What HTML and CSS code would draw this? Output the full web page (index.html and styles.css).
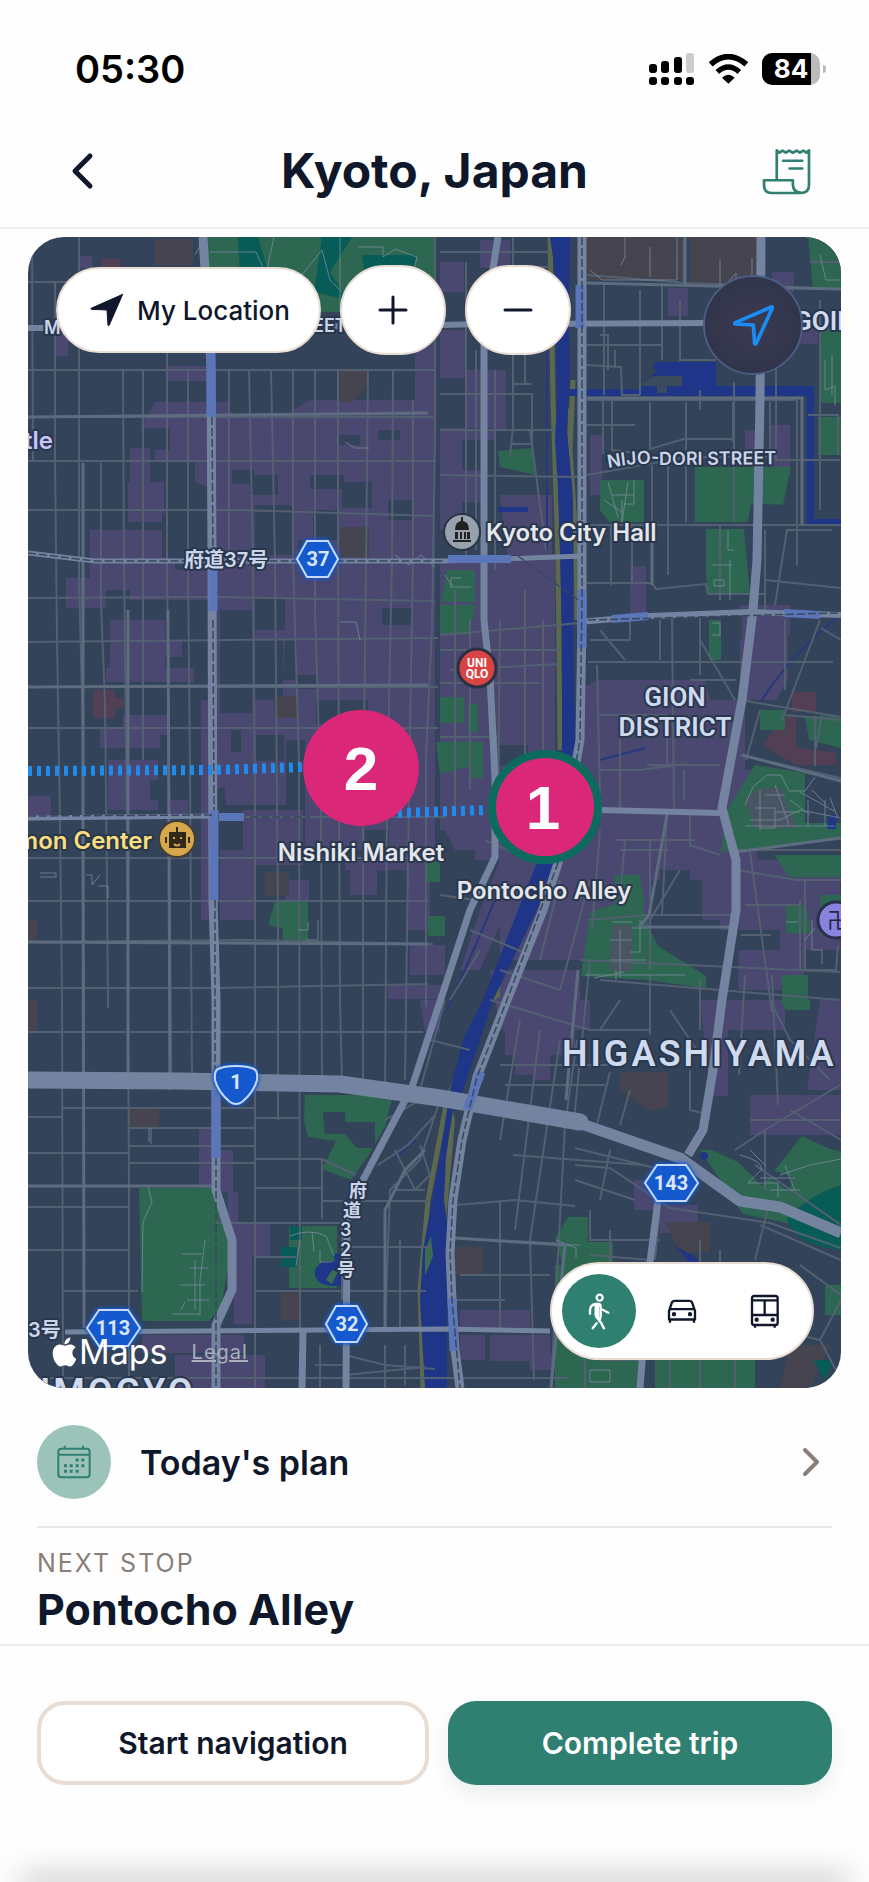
FILE: index.html
```html
<!DOCTYPE html>
<html lang="en">
<head>
    <meta charset="UTF-8">
    <meta name="viewport" content="width=device-width, initial-scale=1.0">
    <title>Kyoto, Japan</title>
    <link rel="stylesheet" href="styles.css">
</head>
<body>
    <div class="status-bar">
        <span class="time">05:30</span>
        <div class="status-icons">
            <svg width="46" height="33" viewBox="0 0 46 33" aria-hidden="true">
                <rect x="0" y="11" width="8" height="9" rx="3"/>
                <rect x="12" y="8" width="8" height="12" rx="3"/>
                <rect x="25" y="4" width="8" height="16" rx="3"/>
                <rect x="37" y="0" width="8" height="20" rx="3" fill="#ccc"/>
                <rect x="0" y="24" width="8" height="8" rx="3"/>
                <rect x="12" y="24" width="8" height="8" rx="3"/>
                <rect x="25" y="24" width="8" height="8" rx="3"/>
                <rect x="37" y="24" width="8" height="8" rx="3"/>
            </svg>
            <svg width="39" height="30" viewBox="326 70 117 90" aria-hidden="true">
                <path d="M331 101Q384 55 438 101" fill="none" stroke="#000" stroke-width="17"/>
                <path d="M351 124Q384 94 417 124" fill="none" stroke="#000" stroke-width="16"/>
                <path d="M384 159L365 141Q384 124 403 141Z"/>
            </svg>
            <div class="battery"><span>84</span></div>
        </div>
    </div>

    <header class="header">
        <button class="icon-btn icon-btn-left" aria-label="Back">
            <svg width="24" height="38" viewBox="0 0 24 38"><path d="M20 4L5 19L20 34" fill="none" stroke="#0f172a" stroke-width="5" stroke-linecap="round" stroke-linejoin="round"/></svg>
        </button>
        <h1>Kyoto, Japan</h1>
        <button class="icon-btn icon-btn-right" aria-label="Expenses">
            <svg width="49" height="47" viewBox="484 354 146 140" fill="none" stroke="#2f8070" stroke-width="8" stroke-linejoin="round" stroke-linecap="round">
                <path d="M528 449V361l8 7 9-6 10 6 10-6 11 6 11-6 10 6 10-6 9 6 8-7V464Q624 488 599 488H512Q490 488 490 464V450H576V463Q577 486 599 487"/>
                <path d="M547 392h57M566 415h38"/>
            </svg>
        </button>
    </header>

    <main>
        <div class="map">
            <svg class="map-canvas" viewBox="28 237 813 1151" preserveAspectRatio="xMidYMid slice" role="img" aria-label="Map of Kyoto">
                <rect x="28" y="237" width="813" height="1151" fill="#334359"/>

                <!-- shopping areas -->
                <g fill="#4a4770">
                    <path d="M167 366h42v15h-42zM155 402h75v10h60l20-12h105v-50l20-20v540h-60v-20h-70v-110h-60v40l-30 10v130h-14V700h14V490l-20-8v-20h-40v-12h15v-22h-30zM128 482h36v40h-36zM130 448h20v60h-20zM90 530h85v60H90zM66 578h40v30H66zM110 620h55v62h-55zM145 640h37v17h-37zM106 668h88v14h-88zM123 715h45v20h-45zM100 728h60v20h-60zM108 760h50v50h-50zM28 796h23v20H28zM168 800h20v16h-20zM56 320h12v36H56zM78 256h14v12H78zM130 570h85v30h-85z"/>
                    <path d="M220 715h66v90h-60zM220 850h35v70h-35zM243 810h60v55h-60zM345 860h32v35h-32zM408 860h22v70h-22zM410 945h35v30h-35zM388 985h57v14h-57zM285 880h24v20h-24z"/>
                    <path d="M440 262h24v30h-24zM480 240h30v28h-30zM440 330h26v48h-26zM466 370h40v60h-40zM440 440h22v90h-22zM440 470h45v32h-45zM500 495h52v60h-45zM590 435h12v60h-12zM440 440h55v-12h-55zM668 288h20v28h-20zM772 272h22v20h-22zM770 425h20v50h-20zM745 430h10v30h-10zM800 320h18v24h-18zM630 566h16v70h-16zM740 605h50v30h-50z"/>
                    <path d="M440 560h115v270H440zM500 850h160v110H500zM597 680h160v210l-20 40H580V690zM738 620h50v60l-30 50h-22zM740 860h100v90h-36v40h-66zM705 1000h80v30h-80zM700 1000h28v96h-18zM820 1000h21v90h-34zM505 1000h70v55h-70zM515 1045h22v30h-22zM535 1050h15v30h-15zM750 1095h91v40h-91zM490 970h100v60h-90zM660 1205h38v28h-38zM634 1180h25v30h-25zM440 820h110l-30 60-40 90h-20l20-60 20-50h-40z"/>
                    <path d="M199 1128h14v64h-14zM219 1150h14v42h-14zM228 1192h10v30h-10zM232 1223h38v34h-38zM234 1250h18v74h-18zM175 1355h90v33h-90zM142 1335h102v18H142zM420 1000h20v32h-15zM460 1310h70v20h-70zM460 1335h25v25h-25zM490 1335h60v26h-60zM530 1355h25v15h-25z"/>
                </g>

                <!-- plain blocks inside them -->
                <g fill="#334359">
                    <path d="M233 400h58v14h-58zM232 470h22v14h-22zM250 475h28v20h-28zM310 475h34v14h-34zM342 482h30v26h-30zM313 510h25v30h-25zM255 505h37v50h-37zM162 514h30v44h-30zM338 435h22v10h-22zM378 430h22v10h-22zM298 540h30v12h-30zM255 598h30v32h-30zM382 608h30v17h-30zM285 640h12v40h-14zM298 675h18v14h-18zM316 700h52v24h-52zM231 730h10v22h-10zM256 735h28v26h-28zM365 830h24v22h-24zM330 870h20v28h-20zM150 780h16v20h-16zM388 500h24v20h-24zM220 610h32v103h-32zM255 640h28v60h-28z"/>
                    <path d="M597 620h100v34h-60v18h-40zM700 615h42v25h-42zM588 655h100v20h-90zM690 620h50v80h-30zM652 880h50v60h-50zM660 870h30v30h-30zM650 920h70v55h-70zM500 745h28v20h-28zM580 970h20v30h-20zM440 850h35v40h-35zM745 700h96v70h-96zM620 1000h80v30h-80zM730 930h50v20h-50z"/>
                </g>

                <!-- campuses and schools -->
                <g fill="#46444e">
                    <path d="M587 237h98v43H587zM690 237h68v50h-68zM155 239h38v26h-38zM340 370h28v16l-16 16h-12zM340 527h29v30h-29zM274 696h24v22h-24zM265 872h24v24h-24zM28 1000h9v32h-9zM28 920h9v20h-9zM128 1108h31v20h-31zM281 1293h20v27h-20zM455 1247h28v27h-28zM620 1072h48v36l-20 2-28-20zM665 1222h45v30h-30zM790 1345h40l-20 43h-30z"/>
                    <path fill="#533f53" d="M93 690h22v8h8v10h-8v10H93zM762 745l22-28h12v30l40 6v12h-40zM102 259h18v8h-18z"/>
                    <path fill="#533f53" d="M792 692h24v20h-24z"/>
                </g>

                <!-- parks -->
                <g fill="#2d6651">
                    <path d="M208 237h227v75H208z"/>
                    <path fill="#085c58" d="M238 237h20l12 40h-30zM322 237h30l-22 35 14 22 12 8-42-10zM362 255h54l-6 48h-40z"/>
                    <path d="M808 237h22l11 20v32h-28zM820 325h21v78h-21zM818 417h23v38h-23zM498 451l34-3 3 27-35-8zM600 480h44v42h-35l-9-12zM695 467h96l-8 38-32-2-3 19h-53zM706 529h38l6 66h-42l-2-20zM447 570h28v32h-34zM440 605h36l-8 30h-28zM709 620h12v40h-12zM440 697h24v26h-24zM468 704h10v28h-10zM436 742h47v36h-12v-12l-31 8z"/>
                    <path d="M760 710h25v20h-25zM805 716h36v32l-32-8zM755 765l50 8v50h36v16l-60 8-60 5 5-40zM775 855h66v22h-52zM786 905h20l6 28h-26zM820 895h21v40h-21zM782 975h26v30h-26zM275 902h33v41h-25v-14l-15-4zM426 862h14v20h-14zM428 916h17v20h-17zM590 912l50-16 8 30 10 20 48 30v12l-60-8-65-4zM645 905h-30v-30h25z"/>
                    <path d="M305 1095h88l-8 32-15 26-19 27-29-11 14-28-28-4-4-17z"/>
                    <path d="M139 1188h74l18 60-10 62-13 11h-66zM289 1226h48v62h-48zM568 1217h20v25h25v26h-50l-8-30zM555 1340h86v48h-86zM655 1355h100v33h-100zM555 1265h40v80h-40zM780 1000h30v10h-24zM825 1285h16v30h-16zM700 1150l12 0 26 12 24 24 40-50 26 12 13 4v40l-50 32-48-10z"/>
                    <path fill="#334359" d="M323 1112h22v10h30v26h-18l-12-14h-20zM743 1160l50 17-4 14z"/>
                    <path fill="#085c58" d="M841 1185v65q-50-6-54-32 24-24 54-33zM281 1247h16v20h-16zM290 1226h12v14h-12zM813 1360h20l-8 20z"/>
                    <path fill="#4a5563" d="M612 925h20v46h-22zM745 800l14-12h22l4 10 12 30h-42z"/>
                </g>

                <!-- river banks, river and canals -->
                <path d="M550 237L553 400L558 560L560 750M573 380L570 450L576 540L577 620M528 905L475 1035L447 1100L428 1200L420 1290L423 1388M545 860L515 930" fill="none" stroke="#5c6950" stroke-width="5"/>
                <path d="M453 1112L440 1190L446 1222L455 1120ZM500 975L484 1005L500 997ZM568 410l6-15v25l-7 20z" fill="#5c6950"/>
                <g fill="#1f3587">
                    <path d="M550 237L570 237L569 330L570 370L567 430L573 497L573 620L575 743L570 810L552 867L537 910L493 1000L480 1040L463 1090L452 1112L446 1157L444 1200L447 1222L447 1388L425 1388L420 1300L423 1250L432 1200L440 1157L450 1090L463 1040L483 1000L518 910L538 860L560 800L562 743L562 620L558 490L555 440L557 400L555 270Z"/>
                    <path d="M498 507h30v5h-30z"/>
                    <path d="M568 389h72l18-20h-4v-7h62v24h98v133h27v6h-34V396H568z"/>
                    <circle cx="704" cy="1156" r="4"/>
                    <path d="M315 1270q6-12 20-8l-2-8h10v14q8 18-8 18-22 0-20-16zM829 815h7v14h-9zM676 1246l20 12 10 14-14-6z"/>
                </g>
                <path d="M654 376h28v10h-15v7h-10v-7h-20z" fill="#3b4a5c"/>
                <path d="M326 1280l6-10 6 2-6 12zM425 1250l6-14 2 20-8 20z" fill="#3d6a53"/>
                <path d="M840 615q-50 40-80 88M600 760l45-12M547 350v200M415 1140l-20 18M495 900l-30 70-18 40" fill="none" stroke="#27397e" stroke-width="2"/>

                <!-- side streets -->
                <g fill="none" stroke="#526072" stroke-width="2">
                    <path d="M32 237l1 223M55 282v178l2 180 3 180 2 180 1 388M79 237v340l4 160M101 463v140l4 100 2 180 1 125M123 370l1 190 3 260 2 368v200M143 370v390M167 282v280l2 210 2 300M188 370v200l2 200 2 312M229 370v190M249 370l4 190 2 230v598M271 370l4 190 3 360v200M293 370v190l6 200 1 568M315 370v240l6 200 1 278M338 370v190l2 440 2 85M368 370l-2 200-3 240v278M393 370l-1 190-5 240-2 290M413 400v160l-4 230-4 290M435 237v200l-3 190-6 130v250"/>
                    <path d="M28 282h180M28 370h407M28 417h405M28 461h407M28 510h210l197 6M28 598l190-1 217 4M28 642l410-4M28 687h410M28 728h410M245 817h200M28 858h400M28 901h400M28 942l215-2 190 4M28 988h190l210-4M28 1032h395M62 1108h192M128 1128h126M128 1146h127M128 1163h127M28 1186h186M28 1207h100M28 1250h100M62 1291h76M28 1378h540M28 1153h100M256 1159h66l34 16M256 1118h44M256 1188h65M216 1223h130M256 1257h40M256 1291h170M322 1201h108M342 1247h90M28 1117h35M322 1159v60M342 1220v80"/>
                    <path d="M466 262v300M476 350v200M495 370v200M513 237v190l-3 30M440 252h110M440 394h92v50h-20M440 430h115M440 475l140 2M530 430l8 60 8 60M510 267h40M512 290h40M512 384h20M525 350v34M455 590v220M470 620v170M500 620l-2 180M525 590v170M543 620v140M440 650h120M440 683h100M440 737h60M440 635l140-12M450 670l110-6"/>
                    <path d="M587 275l100 8 154 6M604 285v110M640 290v105M662 285v75M684 237v45M587 365l34 2 1 28h18M680 300v60h36M700 390v20M734 382v140M587 400h210v125M776 290v170M587 345h75M615 350v18M600 335h8v35M587 425h48M603 400v54M612 400v50l26 3M650 402v47l34-10h49M686 402v120M733 402v40M770 402v60M587 475l100-18h90M587 525h254M652 465v120M668 465v110M611 525v60M632 525v60M587 583h65l4 6 50-5 2 10h58M720 600v-75M765 530v80M765 580l76 8M775 605l12-75h45M797 525v40M770 460h70M820 300v210M810 262h31M770 352h18M808 415h30v40"/>
                    <path d="M588 662h245M600 630l25 30M590 640h40v-22M660 620v40M672 615l2 200M700 615v60M690 680h46M597 665l3 130M597 715h70v50h-20M650 765h70M600 770h40l45-6M620 740v70M684 770v30M667 815l-5 100M690 815v30l30 10M700 640l35 60M740 700l101 17M740 755l101 23M760 710l-14 50M785 620v70M841 640l-20-12M820 620l-38 100M822 715l-6 33M785 715l56 5M735 850h106M750 852l22 160M805 880v90M815 716v50M737 870l60 10h44M588 920l60-5h85M600 830l-8 100M615 840h80M625 840l-5 60M650 840v60M680 870l-30 50v50M580 960l260 12M772 975l6 130M600 980l240 20M650 975v60M590 960l-16 160M700 980v50M745 975l-6 100M800 900v70h36l2-24M620 850h48M745 905h56M741 935h30"/>
                    <path d="M500 970l60 20M490 1000l100 30 60 0M520 1020l-20 120M540 1030l-25 200M560 1040l-30 200 4 140M577 1040l-12 85-14 260M500 1065h110M505 1085h100M610 1072l-15 60M630 1090l-10 35M575 1148l100 25M575 1165l35 3 60 40 100 15 71 25M575 1180l60 20M600 1200l10-50M513 1155l130 10M455 1205l60-5 60 6M455 1238l110 6M500 1200v130M460 1275h90M455 1300h50M590 1210v30h70M610 1230v40M590 1255l60 5M660 1210l-5 50M600 1030l20-30M670 1010l40 60M690 1070v40l20 5M735 1150l30-20 100-60M750 1120h91M765 1130v60M830 1080l-40-40-20-40M790 1110l51 30M755 1165l86 60M770 1200l-15 60M760 1225l81 35M800 1265l41 30M700 1240v30h20v-20M820 1340l21-40M780 1330l40 10 21 40M585 1360v28M600 1360h40v28M660 1350h80M670 1350v38M700 1350v38M735 1350v38"/>
                    <path d="M385 1120l35-20M378 1165l30-20 27-30M440 1100l-20 60-30 30-5 140M395 1150l20 40 15-15-10-30M395 1190h30M400 1240v90M315 1365h30M345 1355l40 10 50 4M320 1345v43M345 1375l80-8M385 1345v43M405 1345v40"/>
                    <path d="M440 895l35 5M485 840l45 20M470 930l60 25M480 950l-30 50M560 880l-20 80M590 880l-30 110M430 1040l40 10M445 1000l-25 90"/>
                </g>

                <!-- footpaths -->
                <g fill="none" stroke="#7f8fa0" stroke-width="1" opacity="0.75">
                    <path d="M210 252h46l10 22 8-37M322 250l-20 25-30 20M322 250l8 30 12 12M340 237v75M358 247h25v10l12-8 22 8-6 25h-40l-28 15M195 255l10-18M590 270l12 10h75v-45M625 237v20l-4 8M650 247v30M720 260v25h6l10-12v14M752 258v30M820 255l6 25h14M825 360v30l10-4v20M832 355v40"/>
                    <path d="M608 482l10 35M628 482l-6 40M634 480v24h-10M612 495h22M604 500l18 12M622 500v22M712 565h20M728 530v20h6M714 580h10v6h-10zM730 560v40M712 623h8v12h-8M445 575l8 12h18M451 588v-10h10M340 622h16l4 18M345 442l10 6h14M395 555l14 10 12-10 14 12"/>
                    <path d="M745 805l8-18 14-12h14l8 16h16l10-14M750 820h30l20-10 41 8M760 790v40M775 785l14 40M790 800l20 15M800 792l36 20M745 826h90M765 795h20M755 808h20v20h-15M812 790l14 14M825 800v25M830 798l8 20M775 812h25M808 800v26M612 922h20M610 940h22M632 928h16M640 920v32h-10M610 960h36M585 975h100M620 930v48M594 978l30-6M616 970v10M805 940l10-12M812 920v30h10v14M786 922h12"/>
                    <path d="M205 1240l-5 40v35M182 1254h20M180 1285h25M190 1268h18M172 1314h28M195 1260v50M187 1300h22M181 1310l4-8M148 1186l4 16-9 20-1 70M290 1236q20-8 36 0l8 20M312 1232l2 20M300 1240l-4 26M320 1250v12h12M740 1155q20 5 22 14l-14 14h30v14M760 1178h35M785 1165l10 26M770 1190h30M780 1175l30-10 31-6M750 1150l16 16M556 1240l20 8v10M566 1245h14M590 1370h20v12h-20zM100 875l-8 10v-10h-6M40 877h16v-4h-16M98 886h10v12M318 920v20h-12M298 930h10v-8M151 1128v16M149 1128v14"/>
                </g>

                <!-- secondary roads -->
                <g fill="none" stroke="#5e6c80" stroke-width="3">
                    <path d="M28 417l400-4M83 463v350l1 515M128 610v470M168 610l2 480M28 687l400-2M28 942l400 2M28 1186h186M685 237v48M587 283l254 6M587 398h215v127M652 525v60M735 852l106-14M742 755l99 26M385 1330v-120l20-40 20-20M455 1238l110 7-14 143M667 815l-18 100-10 12h90M578 970l-12 130"/>
                </g>

                <!-- main roads -->
                <g fill="none" stroke="#7484a0" stroke-linejoin="round">
                    <path d="M28 328h170l244-3 40-1 230-1" stroke-width="6"/>
                    <path d="M203 237l8 128 1 195 1 340 3 100v190l16 50v50l-16 35v63" stroke-width="9"/>
                    <path d="M28 553l67 8h350l138-5" stroke-width="5"/>
                    <path d="M28 818l188-2" stroke-width="5"/>
                    <path d="M498 237l-14 88v295l6 57 5 100v80l-25 53-58 177-49 93-16 40-1 168" stroke-width="7"/>
                    <path d="M582 237v383l-2 120-22 123-15 47-36 90-30 77-15 63-9 60-3 53 2 47 3 50 5 38" stroke-width="9"/>
                    <path d="M761 237l-1 163-3 160-4 50-11 90-20 108 14 52v50l-14 90-9 70-10 60-15 25" stroke-width="9"/>
                    <path d="M578 622l72-6 100-4 91 3" stroke-width="6"/>
                    <path d="M600 810l120 3" stroke-width="6"/>
                    <path d="M65 1332l380-3 105 2" stroke-width="5"/>
                    <path d="M303 1331l-1 57M658 1200l-8 62-10 126" stroke-width="7"/>
                    <path d="M28 1080l152 1 160 3 100 14 140 24" stroke-width="17" stroke-linecap="round"/>
                    <path d="M570 1120l110 38 60 43 40 6 61 26" stroke-width="11"/>
                </g>

                <!-- stations -->
                <g fill="none" stroke="#5a75b8">
                    <path d="M211 353v64M213 561v50M214 810v90M216 1090v68" stroke-width="9"/>
                    <path d="M219 817h25M448 559h63M612 619l36-3M784 613l36 2" stroke-width="8"/>
                    <path d="M580 285v43M582 590v58M481 1072l-14 38M452 1298l2 53" stroke-width="9"/>
                </g>

                <!-- railways -->
                <g fill="none" stroke="#39475e" stroke-width="1.5" stroke-dasharray="8 3">
                    <path d="M212 417l1 143M213 620l1 190M215 900v180M216 1158v230M582 237v360l-2 143-22 123-51 137-30 77-15 63-9 60-3 53 2 47 8 88M28 553l67 8h350M28 816l185-1M588 620l250-7M250 817h60M518 556l60 44"/>
                </g>

                <!-- walking route -->
                <path d="M28 771l185-1 92-3M398 813l90-3" fill="none" stroke="#208bee" stroke-width="10" stroke-dasharray="4 5"/>

                <!-- area and street names -->
                <g class="street">
                    <text x="44" y="334">M</text>
                    <text x="313" y="332">EET</text>
                    <path id="nijo" d="M608 468Q640 462 662 465L800 464" fill="none" stroke="none"/>
                    <text><textPath href="#nijo">NIJO-DORI STREET</textPath></text>
                    <text class="street-jp" x="184" y="567">府道37号</text>
                    <text class="street-jp" x="28" y="1337">3号</text>
                    <text x="349" y="1197">府</text>
                    <text x="343" y="1217">道</text>
                    <text x="340" y="1236">3</text>
                    <text x="340" y="1256">2</text>
                    <text x="337" y="1276">号</text>
                </g>
                <g class="district">
                    <text x="675" y="706" text-anchor="middle">GION</text>
                    <text x="675" y="736" text-anchor="middle">DISTRICT</text>
                    <text x="794" y="330">GOIN</text>
                    <text x="562" y="1066" class="district-lg">HIGASHIYAMA</text>
                    <text x="40" y="1404" class="district-lg">IMOGYO</text>
                </g>

                <!-- places -->
                <g class="place">
                    <text x="24" y="449" fill="#c9c4fb">tle</text>
                    <text x="152" y="849" fill="#fadf7c" text-anchor="end">mon Center</text>
                    <text x="486" y="541" fill="#e4e6ec">Kyoto City Hall</text>
                </g>
                <circle cx="462" cy="532" r="18" fill="#98a1ae" stroke="#2a3546" stroke-width="2"/>
                <path d="M455 530q0-8 6-9v-4h2v4q6 1 6 9zM455 532h3v7h-3zM460 532h2v7h-2zM464 532h2v7h-2zM467 532h3v7h-3zM453 540h18v2h-18z" fill="#222"/>
                <circle cx="177" cy="839" r="18" fill="#d6a84b" stroke="#443d36" stroke-width="2"/>
                <path d="M176 827h2v5h8v16h-17v-16h7zM165 837h2v6h-2zM188 837h2v6h-2z" fill="#33291b"/>
                <path d="M173 838h2M180 838h2M174 844q3 3 6 0" stroke="#d6a84b" stroke-width="2" fill="none"/>
                <circle cx="477" cy="668" r="19" fill="#d94343" stroke="#2c3042" stroke-width="3"/>
                <text class="uniqlo" x="477" y="667">UNI</text>
                <text class="uniqlo" x="477" y="678">QLO</text>
                <circle cx="836" cy="920" r="18" fill="#8983e0" stroke="#292f4c" stroke-width="3"/>
                <text class="temple" x="838" y="928">卍</text>

                <!-- route shields -->
                <g class="shield">
                    <path d="M297 559l10-18h21l10 18-10 18h-21z"/><text x="318" y="566">37</text>
                    <path d="M326 1324l10-18h21l10 18-10 18h-21z"/><text x="347" y="1331">32</text>
                    <path d="M87 1328l12-18h29l12 18-12 18H99z"/><text x="113" y="1335">113</text>
                    <path d="M645 1183l12-18h29l12 18-12 18h-29z"/><text x="671" y="1190">143</text>
                    <path d="M236 1066q12 0 18 3 4 2 3 11-3 12-15 22-6 4-12 0-12-10-15-22-1-9 3-11 6-3 18-3z"/><text x="236" y="1089">1</text>
                </g>

                <!-- stops -->
                <g class="stop">
                    <circle cx="361" cy="768" r="58" fill="#db2777"/>
                    <text class="num" x="361" y="790">2</text>
                    <text class="stop-name" x="361" y="861">Nishiki Market</text>
                    <circle cx="545" cy="807" r="53" fill="#db2777" stroke="#0d6b5d" stroke-width="8"/>
                    <text class="num" x="543" y="829">1</text>
                    <text class="stop-name" x="544" y="899">Pontocho Alley</text>
                </g>
            </svg>

            <div class="map-controls">
                <button class="pill">
                    <svg width="34" height="34" viewBox="208 188 104 102" aria-hidden="true"><path d="M308 191L211 234Q210 237 213 237L260 239L263 286Q265 289 267 285Z" fill="#0f172a" stroke="#0f172a" stroke-width="3" stroke-linejoin="round"/></svg>
                    My Location
                </button>
                <button class="pill zoom" aria-label="Zoom in">
                    <svg width="30" height="30" viewBox="0 0 30 30"><path d="M15 2v26M2 15h26" stroke="#0f172a" stroke-width="3" stroke-linecap="round"/></svg>
                </button>
                <button class="pill zoom" aria-label="Zoom out">
                    <svg width="30" height="30" viewBox="0 0 30 30"><path d="M2 15h26" stroke="#0f172a" stroke-width="3" stroke-linecap="round"/></svg>
                </button>
            </div>

            <button class="compass" aria-label="Track my position">
                <svg width="42" height="42" viewBox="868 228 126 126"><path d="M986 237L878 284Q874 287 879 288L932 291L936 346Q938 350 941 345L989 240Q989 236 986 237Z" fill="none" stroke="#1a8df5" stroke-width="11" stroke-linejoin="round"/></svg>
            </button>

            <div class="attribution">
                <span class="maps-logo">
                    <svg width="29" height="30" viewBox="0 0 24 24" aria-hidden="true"><path fill="#fff" d="M12.152 6.896c-.948 0-2.415-1.078-3.96-1.04-2.04.027-3.91 1.183-4.961 3.014-2.117 3.675-.546 9.103 1.519 12.09 1.013 1.454 2.208 3.09 3.792 3.039 1.52-.065 2.09-.987 3.935-.987 1.831 0 2.35.987 3.96.948 1.637-.026 2.676-1.48 3.676-2.948 1.156-1.688 1.636-3.325 1.662-3.415-.039-.013-3.182-1.221-3.22-4.857-.026-3.04 2.48-4.494 2.597-4.559-1.429-2.09-3.623-2.324-4.39-2.376-2-.156-3.675 1.09-4.61 1.09zM15.53 3.83c.843-1.012 1.4-2.427 1.245-3.83-1.207.052-2.662.805-3.532 1.818-.78.896-1.454 2.338-1.273 3.714 1.338.104 2.715-.688 3.559-1.701z"/></svg>Maps</span>
                <a href="#legal">Legal</a>
            </div>

            <div class="modes">
                <button class="mode active" aria-label="Walk">
                    <svg width="24" height="37" viewBox="136 130 72 111" fill="none" stroke="#fff" stroke-width="7" stroke-linecap="round" stroke-linejoin="round">
                        <circle cx="174" cy="144" r="9"/>
                        <path d="M145 192V182Q146 166 160 163H170Q177 163 177 172V200M162 166V194Q162 200 166 204L177 217L187 236M169 165V202M177 200L173 215M165 221L153 236M183 180L200 189"/>
                    </svg>
                </button>
                <button class="mode" aria-label="Drive">
                    <svg width="30" height="25" viewBox="379 148 90 74" fill="none" stroke="#0f172a" stroke-width="7" stroke-linejoin="round">
                        <path d="M385 209V184L393 160Q395 153 403 153H445Q453 153 455 160L463 184V209ZM388 178H460M388 209V219M460 209V219"/>
                        <circle cx="400" cy="193" r="3"/><circle cx="448" cy="193" r="3"/>
                    </svg>
                </button>
                <button class="mode" aria-label="Transit">
                    <svg width="30" height="35" viewBox="630 133 90 105" fill="none" stroke="#0f172a" stroke-width="7" stroke-linejoin="round">
                        <rect x="636" y="139" width="77" height="87" rx="7"/>
                        <path d="M636 152H713M636 196H713M674 152V196M645 226V234M704 226V234"/>
                        <circle cx="650" cy="210" r="3"/><circle cx="698" cy="210" r="3"/>
                    </svg>
                </button>
            </div>
        </div>

        <section class="plan">
            <button class="plan-row">
                <span class="plan-icon">
                    <svg width="34" height="34" viewBox="112 137 102 102" fill="none" stroke="#2f8070" stroke-width="6">
                        <rect x="116" y="148" width="94" height="86" rx="9"/>
                        <path d="M116 166H210M135 139V148M190 139V148"/>
                        <path d="M168 182h9M185 182h9M133 199h9M150 199h9M168 199h9M185 199h9M133 216h9M150 216h9M168 216h9" stroke-width="9"/>
                    </svg>
                </span>
                <span class="plan-label">Today's plan</span>
                <svg width="18" height="30" viewBox="0 0 18 30" aria-hidden="true"><path d="M3 3L15 15L3 27" fill="none" stroke="#8a7f78" stroke-width="4" stroke-linecap="round" stroke-linejoin="round"/></svg>
            </button>
            <p class="eyebrow">NEXT STOP</p>
            <h2>Pontocho Alley</h2>
        </section>
    </main>

    <footer class="actions">
        <button class="btn btn-outline">Start navigation</button>
        <button class="btn btn-primary">Complete trip</button>
    </footer>
    <div class="sheet-edge"></div>
</body>
</html>
```
FILE: styles.css
```css
* {
    margin: 0;
    padding: 0;
    box-sizing: border-box;
}

body {
    min-height: 100vh;
    display: flex;
    flex-direction: column;
    background: #fefefe;
    color: #0f172a;
    font-family: Inter, "Noto Sans CJK JP", sans-serif;
    overflow-x: hidden;
}

button {
    border: none;
    background: none;
    color: inherit;
    font-family: inherit;
    cursor: pointer;
}

svg {
    display: block;
}

/* Status bar */
.status-bar {
    display: flex;
    justify-content: space-between;
    align-items: center;
    padding: 45px 44px 0 75px;
    color: #000;
}

.time {
    font-size: 38px;
    line-height: 48px;
    font-weight: 600;
}

.status-icons {
    display: flex;
    align-items: center;
    gap: 14px;
}

.battery {
    position: relative;
    width: 58px;
    height: 32px;
    margin-right: 5px;
    border-radius: 10px;
    background: linear-gradient(to right, #000 84%, #bbb 84%);
    color: #fff;
    font-size: 26px;
    font-weight: 700;
    line-height: 32px;
    text-align: center;
}

.battery::after {
    content: "";
    position: absolute;
    right: -6px;
    top: 12px;
    width: 3px;
    height: 8px;
    border-radius: 0 3px 3px 0;
    background: #bbb;
}

/* Header */
.header {
    display: grid;
    grid-template-columns: 1fr auto 1fr;
    align-items: center;
    padding: 48px 58px 26px;
    border-bottom: 2px solid #f0ecea;
}

.header h1 {
    font-size: 48px;
    line-height: 60px;
    font-weight: 700;
}

.icon-btn {
    justify-self: start;
}

.icon-btn-left {
    padding-left: 12px;
}

.icon-btn-right {
    justify-self: end;
}

/* Map */
.map {
    position: relative;
    margin: 8px 28px 0;
    aspect-ratio: 813 / 1151;
    border-radius: 36px;
    overflow: hidden;
}

.map-canvas {
    width: 100%;
    height: 100%;
}

.map-controls {
    position: absolute;
    top: 28px;
    left: 28px;
    display: flex;
    align-items: center;
    gap: 19px;
}

.pill {
    display: flex;
    align-items: center;
    justify-content: center;
    gap: 13px;
    height: 86px;
    padding: 0 29px 0 32px;
    border: 2px solid #e8dcd3;
    border-radius: 45px;
    background: #fff;
    font-size: 26px;
    font-weight: 500;
    white-space: nowrap;
}

.zoom {
    width: 106px;
    height: 90px;
    padding: 0;
}

.compass {
    position: absolute;
    top: 38px;
    right: 38px;
    width: 100px;
    height: 100px;
    display: flex;
    align-items: center;
    justify-content: center;
    border: 2px solid #4b5c84;
    border-radius: 50%;
    background: radial-gradient(circle, #3b3b52, #2d3247);
}

.attribution {
    position: absolute;
    left: 22px;
    bottom: 14px;
    display: flex;
    align-items: center;
    gap: 24px;
}

.maps-logo {
    display: flex;
    align-items: center;
    color: #fff;
    font-size: 34px;
    line-height: 44px;
}

.attribution a {
    color: #a6afbb;
    font-size: 20px;
    letter-spacing: 1px;
}

.modes {
    position: absolute;
    right: 27px;
    bottom: 28px;
    display: flex;
    gap: 9px;
    padding: 10px;
    border: 2px solid #e8dcd3;
    border-radius: 50px;
    background: #fff;
}

.mode {
    width: 74px;
    height: 74px;
    display: flex;
    align-items: center;
    justify-content: center;
    border-radius: 50%;
}

.mode.active {
    background: #2f8070;
}

/* Map labels */
.map-canvas text {
    paint-order: stroke;
    stroke: #29374d;
    stroke-width: 4px;
    stroke-linejoin: round;
}

.street text {
    font-size: 18px;
    font-weight: 600;
    fill: #cbd5ea;
}

.street .street-jp {
    font-size: 20px;
}

.district text {
    font-family: Roboto, sans-serif;
    font-size: 26px;
    font-weight: 600;
    fill: #cfdaef;
}

.district .district-lg {
    font-size: 36px;
    letter-spacing: 3px;
}

.place text,
.stop .stop-name {
    font-size: 24px;
    font-weight: 600;
}

.stop text {
    fill: #fff;
    text-anchor: middle;
}

.stop .stop-name {
    fill: #e4e6ec;
}

.stop .num {
    font-family: "Liberation Sans", sans-serif;
    font-size: 62px;
    font-weight: 700;
    stroke: none;
}

.map-canvas .uniqlo {
    font-family: Roboto, sans-serif;
    font-size: 12px;
    font-weight: 700;
    fill: #fff;
    stroke: none;
    text-anchor: middle;
}

.map-canvas .temple {
    font-size: 22px;
    fill: #25254a;
    stroke: none;
    text-anchor: middle;
}

.shield path {
    fill: #1559cf;
    stroke: #c7dafa;
    stroke-width: 2px;
    filter: drop-shadow(0 0 2px #1559cf) drop-shadow(0 0 1px #1559cf);
}

.shield text {
    font-family: Roboto, sans-serif;
    font-size: 20px;
    font-weight: 700;
    fill: #dbe6fb;
    stroke: none;
    text-anchor: middle;
}

/* Plan */
.plan {
    padding: 0 37px;
}

.plan-row {
    display: flex;
    align-items: center;
    gap: 29px;
    width: 100%;
    padding: 37px 12px 27px 0;
    border-bottom: 2px solid #e7e8ea;
    text-align: left;
}

.plan-icon {
    width: 74px;
    height: 74px;
    display: flex;
    align-items: center;
    justify-content: center;
    border-radius: 50%;
    background: #9bc3b9;
}

.plan-label {
    flex: 1;
    font-size: 34px;
    font-weight: 600;
}

.eyebrow {
    margin-top: 19px;
    color: #8a7f78;
    font-size: 25px;
    line-height: 32px;
    letter-spacing: 2px;
}

.plan h2 {
    margin-top: 4px;
    font-size: 43px;
    line-height: 52px;
    font-weight: 700;
}

/* Actions */
.actions {
    display: flex;
    gap: 19px;
    margin-top: 9px;
    padding: 55px 37px 98px;
    border-top: 2px solid #ebebec;
}

.btn {
    flex: 1 1 0;
    box-sizing: content-box;
    border-radius: 28px;
    font-size: 30px;
    font-weight: 600;
    line-height: 36px;
}

.btn-outline {
    padding: 20px 0;
    border: 4px solid #e8dcd3;
    background: #fff;
}

.btn-primary {
    padding: 24px 0;
    background: #2f8070;
    color: #fff;
    box-shadow: 0 8px 20px rgba(15, 23, 42, 0.08);
}

/* Shadow cast by the sheet under the screen */
.sheet-edge {
    height: 0;
    margin: auto 24px 0;
    box-shadow: 0 0 30px 4px rgba(0, 0, 0, 0.5);
}
```
